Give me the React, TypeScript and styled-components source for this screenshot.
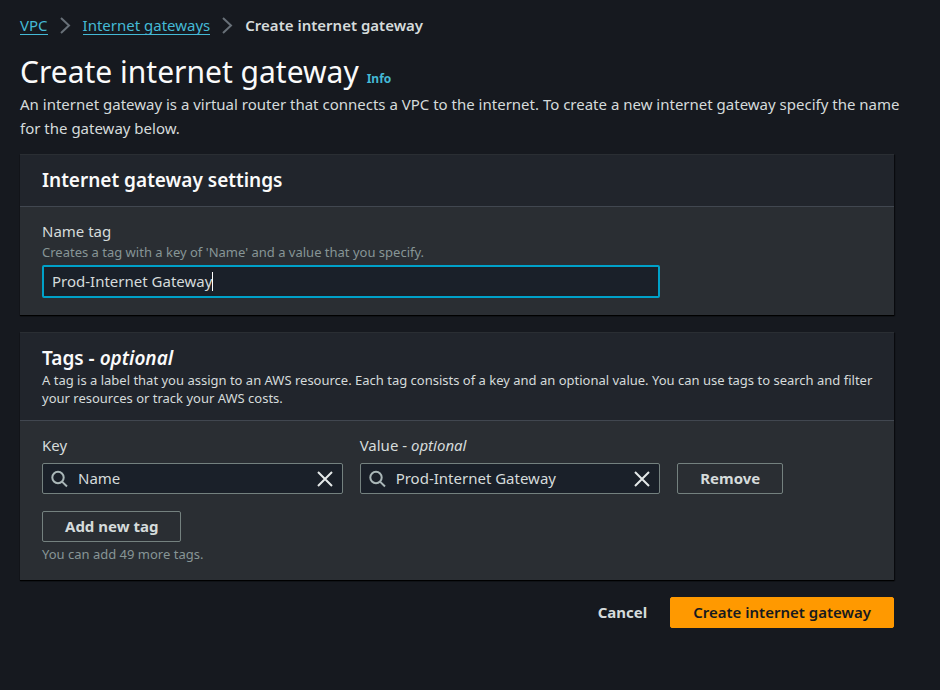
import React, { useId, useState } from "react";
import styled, { createGlobalStyle } from "styled-components";

const color = {
  page: "#16191f",
  header: "#21252c",
  body: "#2a2e33",
  divider: "#414750",
  field: "#1a2029",
  border: "#74817f",
  text: "#d5dbdb",
  strong: "#fafafa",
  muted: "#879596",
  link: "#44b9d6",
  focus: "#00a1c9",
  primary: "#ff9900",
};

const GlobalStyle = createGlobalStyle`
  *, *::before, *::after { box-sizing: border-box; }
  body {
    margin: 0;
    background: ${color.page};
    color: ${color.text};
    font: 15px/24px "Noto Sans", "Open Sans", sans-serif;
  }
  button, input { font: inherit; color: inherit; }
`;

const Page = styled.main`
  padding: 13px 0 24px 20px;
`;

const PageHeader = styled.header`
  padding-right: 36px;
`;

const Form = styled.form`
  padding-right: 46px;
`;

const Crumbs = styled.ol`
  display: flex;
  align-items: center;
  gap: 10px;
  margin: 0 0 17px;
  padding: 0;
  list-style: none;
`;

const Crumb = styled.li<{ $current?: boolean }>`
  display: flex;
  align-items: center;
  gap: 10px;
  font-weight: ${(p) => (p.$current ? 600 : 400)};
`;

const CrumbLink = styled.a`
  color: ${color.link};
  text-decoration: none;
  border-bottom: 1px solid ${color.link};
  line-height: 18px;
`;

const Heading = styled.div`
  display: flex;
  align-items: baseline;
  gap: 8px;
`;

const Title = styled.h1`
  margin: 0;
  font-size: 30px;
  line-height: 35px;
  font-weight: 400;
  color: ${color.strong};
`;

const InfoLink = styled.a`
  color: ${color.link};
  font-size: 12px;
  line-height: 18px;
  font-weight: 700;
  text-decoration: none;
`;

const Intro = styled.p`
  margin: 3px 0 14px;
`;

const Panel = styled.section`
  margin-bottom: 17px;
  background: ${color.body};
  border-top: 1px solid #2a2e33;
  box-shadow: 0 1px 1px #000, 1px 1px 1px #0b0d11;
`;

const PanelHeader = styled.header`
  padding: 12px 14px 13px 22px;
  background: ${color.header};
  border-bottom: 1px solid ${color.divider};
`;

const PanelTitle = styled.h2`
  margin: 0;
  font-size: 19px;
  line-height: 26px;
  font-weight: 600;
  color: ${color.strong};
`;

const PanelText = styled.p`
  margin: 0;
  font-size: 13px;
  line-height: 18px;
`;

const PanelBody = styled.div`
  display: grid;
  grid-template-columns: repeat(8, 1fr);
  column-gap: 17px;
  padding: 12px 22px 17px;
`;

const Field = styled.div<{ $span: number }>`
  grid-column: span ${(p) => p.$span};
  display: flex;
  flex-direction: column;
`;

const Label = styled.label``;

const Hint = styled.span`
  color: ${color.muted};
  font-size: 13px;
  line-height: 18px;
`;

const InputFrame = styled.div`
  position: relative;
  height: 33px;
  margin-top: 4px;
`;

const TextInput = styled.input`
  width: 100%;
  height: 100%;
  padding: 0 8px 2px;
  background: ${color.field};
  border: 2px solid ${color.focus};
  border-radius: 2px;
  outline: none;
  caret-color: transparent;
`;

/* Mirrors the input's text so that the caret stands right after it. */
const CaretLayer = styled.span`
  position: absolute;
  inset: 0 10px;
  display: flex;
  align-items: center;
  overflow: hidden;
  white-space: pre;
  color: transparent;
  pointer-events: none;

  &::after {
    content: "";
    width: 1px;
    height: 19px;
    background: #fff;
  }
`;

const SearchBox = styled.div`
  display: flex;
  align-items: center;
  gap: 9px;
  height: 31px;
  margin-top: 6px;
  padding: 0 8px;
  background: ${color.field};
  border: 1px solid ${color.border};
  border-radius: 2px;
`;

const SearchInput = styled.input`
  flex: 1;
  min-width: 0;
  padding: 0 0 1px;
  background: none;
  border: 0;
  outline: none;
`;

const IconButton = styled.button`
  display: flex;
  padding: 0;
  background: none;
  border: 0;
  cursor: pointer;
`;

const Button = styled.button<{ $kind?: "normal" | "primary" | "link" }>`
  height: 31px;
  padding: 0 22px 2px;
  font-weight: ${(p) => (p.$kind === "primary" ? 600 : 700)};
  line-height: 20px;
  white-space: nowrap;
  cursor: pointer;
  border-radius: 2px;
  border: 1px solid
    ${(p) => (p.$kind === "primary" ? color.primary : p.$kind === "link" ? "transparent" : color.border)};
  background: ${(p) => (p.$kind === "primary" ? color.primary : "transparent")};
  color: ${(p) => (p.$kind === "primary" ? color.page : color.text)};
`;

const RemoveCell = styled.div`
  grid-column: span 2;
  align-self: end;
  display: flex;
`;

const AddRow = styled.div`
  grid-column: 1 / -1;
  display: flex;
  flex-direction: column;
  align-items: flex-start;
  gap: 3px;
  margin-top: 17px;
`;

const Actions = styled.div`
  display: flex;
  justify-content: flex-end;
`;

const Chevron = () => (
  <svg width="15" height="20" viewBox="0 0 15 20" fill="none" stroke="#687078" strokeWidth="2" aria-hidden="true">
    <path d="M3 3l8 7.500L3 18" />
  </svg>
);

const SearchIcon = () => (
  <svg width="18" height="18" viewBox="0 0 18 18" fill="none" stroke="#aab7b8" strokeWidth="2" aria-hidden="true">
    <circle cx="7" cy="7.500" r="5.700" />
    <path d="M11 11.600L16 16.500" />
  </svg>
);

const CloseIcon = () => (
  <svg width="18" height="18" viewBox="0 0 18 18" fill="none" stroke="#e4e8e8" strokeWidth="2" aria-hidden="true">
    <path d="M2 2l14 14M16 2l-14 14" />
  </svg>
);

type SearchFieldProps = {
  label: React.ReactNode;
  value: string;
  onChange: (value: string) => void;
};

function SearchField({ label, value, onChange }: SearchFieldProps) {
  const id = useId();
  return (
    <Field $span={3}>
      <Label htmlFor={id}>{label}</Label>
      <SearchBox>
        <SearchIcon />
        <SearchInput id={id} value={value} onChange={(e) => onChange(e.target.value)} />
        <IconButton type="button" aria-label="Clear" onClick={() => onChange("")}>
          <CloseIcon />
        </IconButton>
      </SearchBox>
    </Field>
  );
}

export default function App() {
  const [name, setName] = useState("Prod-Internet Gateway");
  const [tagKey, setTagKey] = useState("Name");

  return (
    <Page>
      <GlobalStyle />
      <PageHeader>
        <nav aria-label="Breadcrumbs">
          <Crumbs>
            <Crumb>
              <CrumbLink href="#vpc">VPC</CrumbLink>
              <Chevron />
            </Crumb>
            <Crumb>
              <CrumbLink href="#gateways">Internet gateways</CrumbLink>
              <Chevron />
            </Crumb>
            <Crumb $current>Create internet gateway</Crumb>
          </Crumbs>
        </nav>

        <Heading>
          <Title>Create internet gateway</Title>
          <InfoLink href="#info">Info</InfoLink>
        </Heading>
        <Intro>
          An internet gateway is a virtual router that connects a VPC to the internet. To create a new internet gateway
          specify the name for the gateway below.
        </Intro>
      </PageHeader>

      <Form onSubmit={(e) => e.preventDefault()}>
        <Panel>
          <PanelHeader>
            <PanelTitle>Internet gateway settings</PanelTitle>
          </PanelHeader>
          <PanelBody>
            <Field $span={6}>
              <Label htmlFor="name-tag">Name tag</Label>
              <Hint id="name-hint">Creates a tag with a key of 'Name' and a value that you specify.</Hint>
              <InputFrame>
                <TextInput
                  id="name-tag"
                  aria-describedby="name-hint"
                  autoFocus
                  value={name}
                  onChange={(e) => setName(e.target.value)}
                />
                <CaretLayer aria-hidden="true">{name}</CaretLayer>
              </InputFrame>
            </Field>
          </PanelBody>
        </Panel>

        <Panel>
          <PanelHeader>
            <PanelTitle>
              Tags - <em>optional</em>
            </PanelTitle>
            <PanelText>
              A tag is a label that you assign to an AWS resource. Each tag consists of a key and an optional value. You
              can use tags to search and filter your resources or track your AWS costs.
            </PanelText>
          </PanelHeader>
          <PanelBody>
            <SearchField label="Key" value={tagKey} onChange={setTagKey} />
            <SearchField
              label={
                <>
                  Value - <em>optional</em>
                </>
              }
              value={name}
              onChange={setName}
            />
            <RemoveCell>
              <Button type="button">Remove</Button>
            </RemoveCell>
            <AddRow>
              <Button type="button">Add new tag</Button>
              <Hint>You can add 49 more tags.</Hint>
            </AddRow>
          </PanelBody>
        </Panel>

        <Actions>
          <Button type="button" $kind="link">
            Cancel
          </Button>
          <Button type="submit" $kind="primary">
            Create internet gateway
          </Button>
        </Actions>
      </Form>
    </Page>
  );
}
